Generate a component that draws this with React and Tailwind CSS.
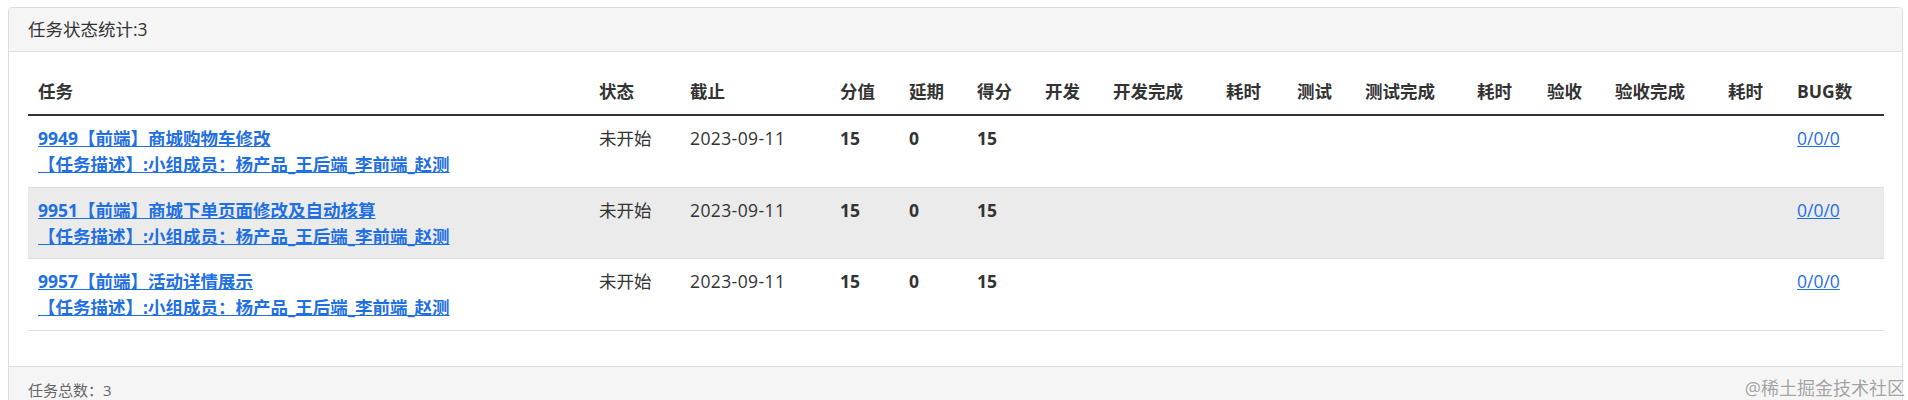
import React from "react";

// column widths measured from the task table
const columns = [
  { key: "task", label: "任务", width: "w-[561px]" },
  { key: "status", label: "状态", width: "w-[91px]" },
  { key: "deadline", label: "截止", width: "w-[150px]" },
  { key: "points", label: "分值", width: "w-[69px]" },
  { key: "delay", label: "延期", width: "w-[68px]" },
  { key: "score", label: "得分", width: "w-[68px]" },
  { key: "dev", label: "开发", width: "w-[68px]" },
  { key: "devDone", label: "开发完成", width: "w-[113px]" },
  { key: "devTime", label: "耗时", width: "w-[71px]" },
  { key: "test", label: "测试", width: "w-[68px]" },
  { key: "testDone", label: "测试完成", width: "w-[112px]" },
  { key: "testTime", label: "耗时", width: "w-[70px]" },
  { key: "check", label: "验收", width: "w-[68px]" },
  { key: "checkDone", label: "验收完成", width: "w-[113px]" },
  { key: "checkTime", label: "耗时", width: "w-[69px]" },
  { key: "bugs", label: "BUG数", width: "w-[97px]" },
];

const tasks = [
  { id: 9949, title: "商城购物车修改" },
  { id: 9951, title: "商城下单页面修改及自动核算", highlight: true },
  { id: 9957, title: "活动详情展示" },
];

const desc = "【任务描述】:小组成员：杨产品_王后端_李前端_赵测";

const TaskRow = ({ task }) => (
  <tr
    className={`border-b border-[#dddddd] align-top ${
      task.highlight ? "bg-[#ebebeb]" : "bg-white"
    }`}
  >
    <td className="px-[10px] pt-[9px] pb-[9.5px] leading-[26px]">
      <a href="#" className="block font-bold text-[#1f6fe5] underline">
        {task.id}【前端】{task.title}
      </a>
      <a href="#" className="block font-bold text-[#1f6fe5] underline">
        {desc}
      </a>
    </td>
    <td className="px-[10px] pt-[9px] leading-[26px]">未开始</td>
    <td className="px-[10px] pt-[9px] leading-[26px] tracking-[0.4px]">2023-09-11</td>
    <td className="px-[10px] pt-[9px] leading-[26px] font-bold">15</td>
    <td className="px-[10px] pt-[9px] leading-[26px] font-bold">0</td>
    <td className="px-[10px] pt-[9px] leading-[26px] font-bold">15</td>
    <td />
    <td />
    <td />
    <td />
    <td />
    <td />
    <td />
    <td />
    <td />
    <td className="px-[10px] pt-[9px] leading-[26px]">
      <a href="#" className="text-[#1f6fe5] underline">
        0/0/0
      </a>
    </td>
  </tr>
);

export default function App() {
  return (
    <div className="relative min-h-[400px] bg-white pt-[7px] pl-[8px] pr-[5px] font-['Open_Sans','Noto_Sans_CJK_SC',sans-serif] text-[17.5px] text-[#333333]">
      <div className="border border-[#dddddd] rounded-[4px] overflow-hidden">
        {/* Heading */}
        <div className="h-[44px] flex items-center px-[19px] bg-[#f5f5f5] border-b border-[#dddddd]">
          任务状态统计:3
        </div>

        {/* Body */}
        <div className="px-[19px] pt-[17px] pb-[35px]">
          <table className="w-full table-fixed border-collapse">
            <colgroup>
              {columns.map((c) => (
                <col key={c.key} className={c.width} />
              ))}
            </colgroup>
            <thead>
              <tr className="border-b-2 border-[#333333]">
                {columns.map((c) => (
                  <th
                    key={c.key}
                    className="px-[10px] pt-[10px] pb-[10px] leading-[25px] text-left font-bold whitespace-nowrap"
                  >
                    {c.label}
                  </th>
                ))}
              </tr>
            </thead>
            <tbody>
              {tasks.map((t) => (
                <TaskRow key={t.id} task={t} />
              ))}
            </tbody>
          </table>
        </div>

        {/* Footer */}
        <div className="px-[19px] pt-[13px] pb-[12px] leading-[21px] bg-[#f5f5f5] border-t border-[#dddddd] text-[15px] text-[#666666]">
          任务总数：3
        </div>
      </div>

      {/* Watermark */}
      <div className="absolute right-[3px] top-[376px] text-[18px] leading-[24px] text-[#a3a3a3] [text-shadow:0_0_2px_#ffffff]">
        @稀土掘金技术社区
      </div>
    </div>
  );
}
